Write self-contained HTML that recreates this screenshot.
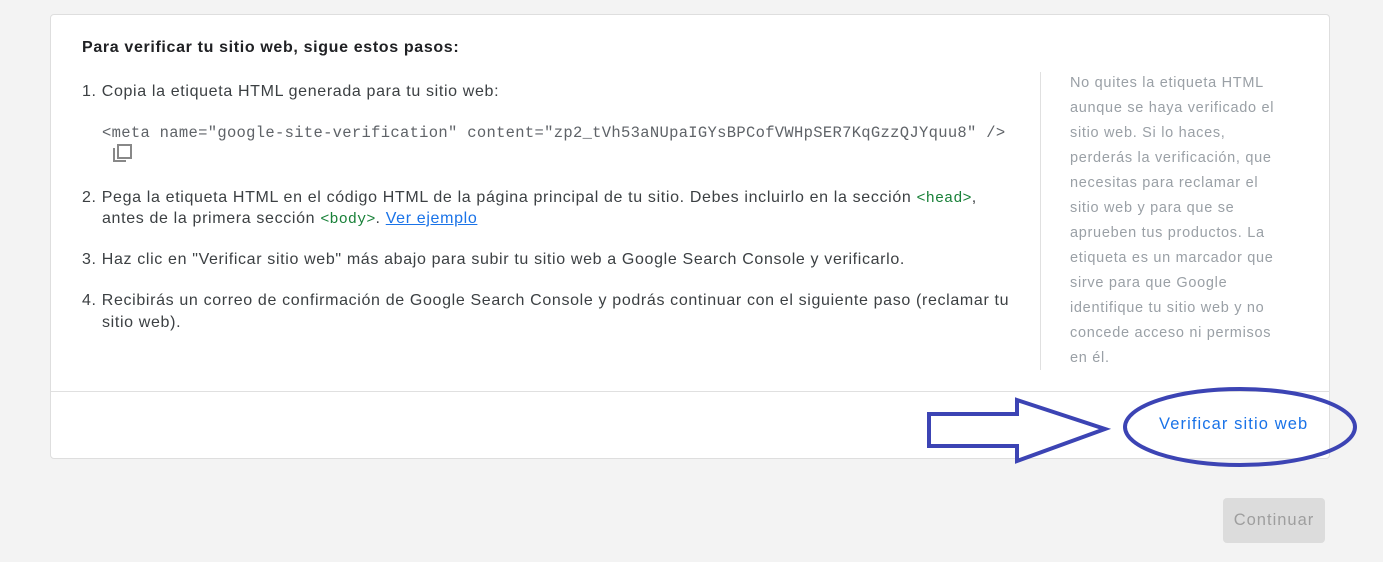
<!DOCTYPE html>
<html><head><meta charset="utf-8"><style>
body{margin:0;width:1383px;height:562px;background:#f3f3f3;font-family:"Liberation Sans",sans-serif;position:relative;overflow:hidden}
.card{position:absolute;left:50px;top:14px;width:1278px;height:443px;background:#fff;border:1px solid #dedede;border-radius:4px}
.t{position:absolute;white-space:nowrap;color:#3c4043;font-size:16px;letter-spacing:0.65px}
.mono{font-family:"Liberation Mono",monospace;font-size:15.5px;color:#5f6368;letter-spacing:0.31px}
.g{font-family:"Liberation Mono",monospace;color:#188038;font-size:15px;letter-spacing:0.2px}
a{color:#1a73e8;text-decoration:underline}
.side{position:absolute;left:1070px;color:#9aa0a6;font-size:14.5px;white-space:nowrap;letter-spacing:0.7px}
</style></head><body>
<div class="card"></div>
<div class="t" style="left:82px;top:39px;font-weight:bold;color:#202124;font-size:16px">Para verificar tu sitio web, sigue estos pasos:</div>
<div class="t" style="left:82px;top:83px">1. Copia la etiqueta HTML generada para tu sitio web:</div>
<div class="t mono" style="left:102px;top:124px">&lt;meta name="google-site-verification" content="zp2_tVh53aNUpaIGYsBPCofVWHpSER7KqGzzQJYquu8" /&gt;</div>
<svg style="position:absolute;left:112px;top:144px" width="20" height="20" viewBox="0 0 20 20"><path d="M2 4v13h12" fill="none" stroke="#888" stroke-width="2"/><rect x="6" y="1" width="13" height="13" fill="none" stroke="#888" stroke-width="2"/></svg>
<div class="t" style="left:82px;top:189px">2. Pega la etiqueta HTML en el código HTML de la página principal de tu sitio. Debes incluirlo en la sección <span class="g">&lt;head&gt;</span>,</div>
<div class="t" style="left:102px;top:210px">antes de la primera sección <span class="g">&lt;body&gt;</span>. <a>Ver ejemplo</a></div>
<div class="t" style="left:82px;top:251px">3. Haz clic en "Verificar sitio web" más abajo para subir tu sitio web a Google Search Console y verificarlo.</div>
<div class="t" style="left:82px;top:292px">4. Recibirás un correo de confirmación de Google Search Console y podrás continuar con el siguiente paso (reclamar tu</div>
<div class="t" style="left:102px;top:314px">sitio web).</div>
<div style="position:absolute;left:1040px;top:72px;width:1px;height:298px;background:#e0e0e0"></div>
<div class="side" style="top:75px">No quites la etiqueta HTML</div>
<div class="side" style="top:100px">aunque se haya verificado el</div>
<div class="side" style="top:125px">sitio web. Si lo haces,</div>
<div class="side" style="top:150px">perderás la verificación, que</div>
<div class="side" style="top:175px">necesitas para reclamar el</div>
<div class="side" style="top:200px">sitio web y para que se</div>
<div class="side" style="top:225px">aprueben tus productos. La</div>
<div class="side" style="top:250px">etiqueta es un marcador que</div>
<div class="side" style="top:275px">sirve para que Google</div>
<div class="side" style="top:300px">identifique tu sitio web y no</div>
<div class="side" style="top:325px">concede acceso ni permisos</div>
<div class="side" style="top:350px">en él.</div>
<div style="position:absolute;left:51px;top:391px;width:1278px;height:1px;background:#e0e0e0"></div>
<div class="t" style="left:1159px;top:415px;color:#1a73e8;font-size:16.5px;letter-spacing:1.1px">Verificar sitio web</div>
<svg style="position:absolute;left:0;top:0" width="1383" height="562"><path d="M929 414H1017V400L1105 429L1017 461V446H929Z" fill="none" stroke="#3c44b4" stroke-width="4" stroke-linejoin="miter"/><ellipse cx="1240" cy="427" rx="115" ry="38" fill="none" stroke="#3c44b4" stroke-width="4"/></svg>
<div style="position:absolute;left:1223px;top:498px;width:102px;height:45px;background:#dcdcdc;border-radius:4px;color:#9e9e9e;font-size:16.5px;letter-spacing:1px;line-height:45px;text-align:center">Continuar</div>
</body></html>
